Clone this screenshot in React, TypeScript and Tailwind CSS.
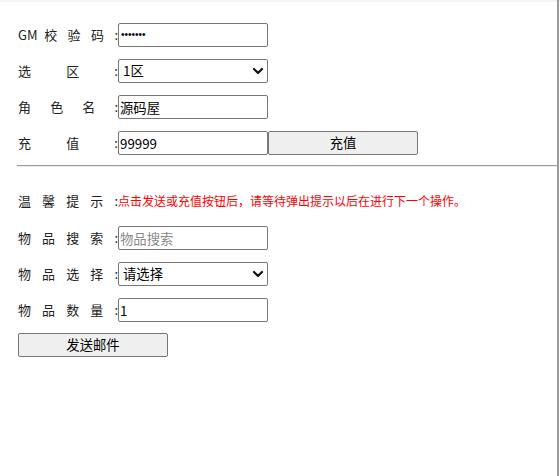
import React from "react";

const font = { fontFamily: '"Noto Sans CJK SC", "Liberation Sans", sans-serif' };

function Label({ text }: { text: string }) {
  return (
    <span className="inline-block w-[100px] text-[13px] text-[#222] [text-align:justify] [text-align-last:justify] leading-[24px] shrink-0">
      {text}
    </span>
  );
}

const inputCls =
  "w-[150px] h-[24px] border border-[#767676] rounded-[2px] px-[1px] text-[13.33px] text-black bg-white outline-none";

function Chevron() {
  return (
    <svg width="12" height="12" viewBox="0 0 12 12" className="absolute right-[4px] top-[6px] pointer-events-none">
      <path d="M2 4 L6 8 L10 4" stroke="#111" strokeWidth="2.2" fill="none" strokeLinecap="round" strokeLinejoin="round" />
    </svg>
  );
}

function Select({ value }: { value: string }) {
  return (
    <div className="relative w-[150px] h-[24px]">
      <div className="w-[150px] h-[24px] border border-[#767676] rounded-[2px] pl-[4px] text-[13.33px] leading-[22px] text-black bg-white">
        {value}
      </div>
      <Chevron />
    </div>
  );
}

export default function App() {
  return (
    <div className="w-[560px] h-[476px] bg-white relative overflow-hidden" style={font}>
      <div className="absolute top-0 left-0 right-0 h-[2px] bg-[#f3f3f3]" />
      <div className="absolute top-0 bottom-0 right-[1px] w-[2px] bg-[#9a9a9a]" />
      <div className="pl-[18px] pt-[23px] pr-[2px]">
        <div className="flex items-center h-[24px]">
          <Label text="GM 校 验 码 :" />
          <div className="w-[150px] h-[24px] border border-[#767676] rounded-[2px] pl-[2px] bg-white text-black text-[10px] leading-[22px] font-['Liberation_Sans',sans-serif]">
            •••••••
          </div>
        </div>
        <div className="flex items-center h-[24px] mt-[12px]">
          <Label text="选 区 :" />
          <Select value="1区" />
        </div>
        <div className="flex items-center h-[24px] mt-[12px]">
          <Label text="角 色 名 :" />
          <input className={inputCls} defaultValue="源码屋" />
        </div>
        <div className="flex items-center h-[24px] mt-[12px]">
          <Label text="充 值 :" />
          <input className={inputCls} defaultValue="99999" />
          <button className="w-[150px] h-[24px] border border-[#767676] rounded-[2px] bg-[#efefef] text-[13.33px] text-black leading-[22px]">
            充值
          </button>
        </div>
        <div className="mt-[10px] -ml-[1px] h-[2px] border-t border-[#9a9a9a] border-b border-b-[#eeeeee]" />
        <div className="flex items-center h-[24px] mt-[22px]">
          <Label text="温 馨 提 示 :" />
          <span className="text-[12px] text-[#ff0000] leading-[24px] whitespace-nowrap">
            点击发送或充值按钮后，请等待弹出提示以后在进行下一个操作。
          </span>
        </div>
        <div className="flex items-center h-[24px] mt-[13px]">
          <Label text="物 品 搜 索 :" />
          <input className={inputCls + " placeholder:text-[#8a8a8a]"} placeholder="物品搜索" />
        </div>
        <div className="flex items-center h-[24px] mt-[12px]">
          <Label text="物 品 选 择 :" />
          <Select value="请选择" />
        </div>
        <div className="flex items-center h-[24px] mt-[12px]">
          <Label text="物 品 数 量 :" />
          <input className={inputCls} defaultValue="1" />
        </div>
        <button className="mt-[11px] w-[150px] h-[24px] border border-[#767676] rounded-[2px] bg-[#efefef] text-[13.33px] text-black leading-[22px] block">
          发送邮件
        </button>
      </div>
    </div>
  );
}
